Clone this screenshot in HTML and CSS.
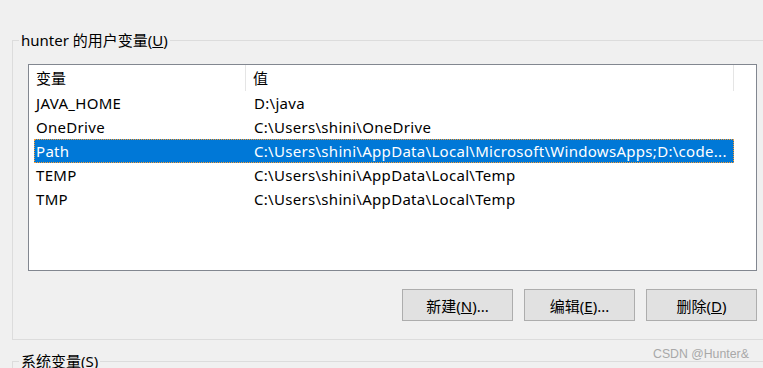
FILE: index.html
```html
<!DOCTYPE html>
<html lang="zh-CN">
<head>
    <meta charset="UTF-8">
    <title>环境变量</title>
    <link rel="stylesheet" href="styles.css">
</head>
<body>
<fieldset class="group">
    <legend class="groupTitle">hunter 的用户变量(<u>U</u>)</legend>
    <div class="listBox">
        <div class="listHead">
            <div class="headName">变量</div>
            <div class="headValue">值</div>
        </div>
        <div class="row"><span class="name">JAVA_HOME</span><span class="value">D:\java</span></div>
        <div class="row"><span class="name">OneDrive</span><span class="value">C:\Users\shini\OneDrive</span></div>
        <div class="row selected"><span class="name">Path</span><span class="value">C:\Users\shini\AppData\Local\Microsoft\WindowsApps;D:\code...</span></div>
        <div class="row"><span class="name">TEMP</span><span class="value">C:\Users\shini\AppData\Local\Temp</span></div>
        <div class="row"><span class="name">TMP</span><span class="value">C:\Users\shini\AppData\Local\Temp</span></div>
    </div>
    <div class="buttons">
        <button class="btn">新建(<u>N</u>)...</button>
        <button class="btn">编辑(<u>E</u>)...</button>
        <button class="btn">删除(<u>D</u>)</button>
    </div>
</fieldset>
<fieldset class="group sysGroup">
    <legend class="groupTitle">系统变量(<u>S</u>)</legend>
</fieldset>
<div class="mark">CSDN @Hunter&amp;</div>
</body>
</html>
```

FILE: styles.css
```css
html, body{
    margin: 0;
    overflow: hidden;
    height: 100%;
}
body{
    position: relative;
    background-color: #f0f0f0;
    font-family: "Noto Sans", "Noto Sans CJK SC", sans-serif;
    font-size: 15px;
    color: #000;
}
.group{
    width: 800px;
    margin: 30px 0 0 12px;
    padding: 0 0 18px 15px;
    border: 1px solid #dcdcdc;
    border-right: none;
}
.groupTitle{
    margin-left: -9px;
    padding: 0 2px;
    line-height: 20px;
}
.sysGroup{
    margin-top: 11px;
    height: 40px;
}
.listBox{
    width: 727px;
    height: 205px;
    margin-top: 14px;
    border: 1px solid #828790;
    background-color: #fff;
}
.listHead{
    display: flex;
    height: 26px;
    line-height: 26px;
    margin-left: 5px;
    width: 700px;
}
.headName{
    width: 209px;
    padding-left: 2px;
    border-right: 1px solid #e5e5e5;
}
.headValue{
    flex: 1;
    padding-left: 7px;
    border-right: 1px solid #e5e5e5;
}
.row{
    display: flex;
    height: 24px;
    line-height: 24px;
    margin-left: 5px;
    width: 700px;
    white-space: nowrap;
    letter-spacing: 0.3px;
}
.name{
    width: 218px;
    padding-left: 2px;
}
.value{
    flex: 1;
}
.selected{
    background-color: #0078d7;
    color: #fff;
    outline: 1px dotted #ff9d2e;
    outline-offset: -1px;
}
.buttons{
    display: flex;
    justify-content: flex-end;
    gap: 11px;
    width: 729px;
    margin-top: 18px;
}
.btn{
    width: 111px;
    height: 32px;
    padding: 0;
    border: 1px solid #adadad;
    background-color: #e1e1e1;
    font-family: inherit;
    font-size: 15px;
    color: #000;
}
.mark{
    position: absolute;
    left: 653px;
    top: 347px;
    font-family: "Liberation Sans", sans-serif;
    font-size: 12.3px;
    color: #a8a8a8;
}
```
